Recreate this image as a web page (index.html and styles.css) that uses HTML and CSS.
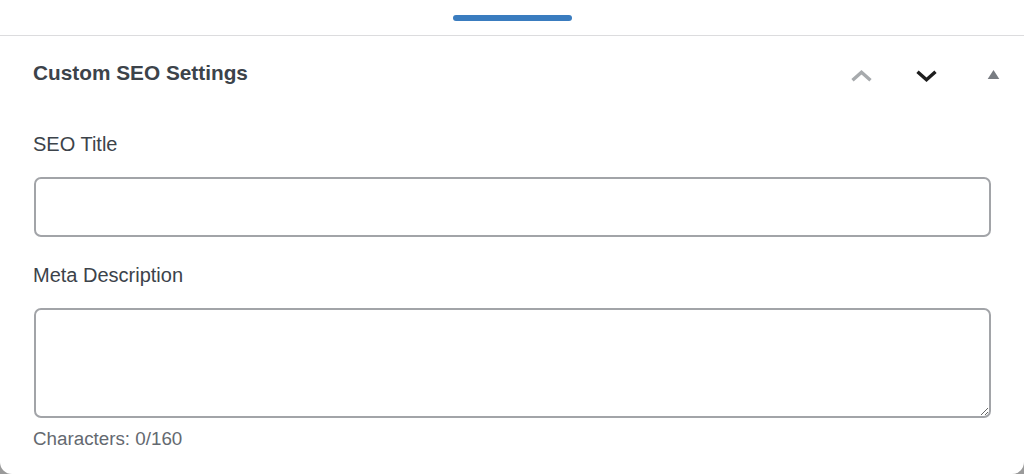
FILE: index.html
```html
<!DOCTYPE html>
<html lang="en">
<head>
    <meta charset="UTF-8">
    <meta name="viewport" content="width=device-width, initial-scale=1.0">
    <title>Custom SEO Settings</title>
    <link rel="stylesheet" href="styles.css">
</head>
<body>

    <div class="screen">
        <!-- Barra superior con el indicador -->
        <div class="top-bar">
            <span class="handle"></span>
        </div>

        <!-- Metabox de SEO -->
        <section class="metabox">
            <div class="metabox-header">
                <h2>Custom SEO Settings</h2>
                <div class="metabox-actions">
                    <button type="button" class="icon-btn" aria-label="Move up">
                        <svg width="44" height="44" viewBox="0 0 44 44">
                            <polyline points="12.5,29.3 21.5,21.3 30.5,29.3" fill="none" stroke="#a7aaad" stroke-width="3.4"/>
                        </svg>
                    </button>
                    <button type="button" class="icon-btn" aria-label="Move down">
                        <svg width="44" height="44" viewBox="0 0 44 44">
                            <polyline points="11.5,20.8 20.5,28.8 29.5,20.8" fill="none" stroke="#1e1e1e" stroke-width="3.4"/>
                        </svg>
                    </button>
                    <button type="button" class="icon-btn" aria-label="Toggle panel">
                        <svg width="44" height="44" viewBox="0 0 44 44">
                            <polygon points="15.7,28 21.5,19 27.3,28" fill="#787c82"/>
                        </svg>
                    </button>
                </div>
            </div>

            <div class="metabox-body">
                <label class="field-label" for="seo-title">SEO Title</label>
                <input type="text" id="seo-title" class="text-input">

                <label class="field-label" for="seo-description">Meta Description</label>
                <textarea id="seo-description" class="text-area"></textarea>

                <p class="counter">Characters: 0/160</p>
            </div>
        </section>
    </div>

</body>
</html>
```

FILE: styles.css
```css
/* Estilos básicos */
html, body {
    margin: 0;
    padding: 0;
    height: 474px;
    overflow: hidden;
    background-color: #9a9a9a;
    font-family: "Liberation Sans", Arial, sans-serif;
}
.screen {
    height: 474px;
    background-color: #fff;
    border-radius: 0 0 12px 12px;
}
.top-bar {
    height: 35px;
    border-bottom: 1px solid #dcdcde;
    display: flex;
    justify-content: center;
}
.handle {
    width: 119px;
    height: 6px;
    margin-top: 15px;
    border-radius: 3px;
    background-color: #3a7cbf;
}
.metabox-header {
    height: 48px;
    padding: 13px 8px 0 33px;
    display: flex;
    align-items: center;
    justify-content: space-between;
}
.metabox-header h2 {
    margin: 0;
    font-size: 20.8px;
    line-height: 24px;
    font-weight: 700;
    color: #3c434a;
}
.metabox-actions {
    display: flex;
    gap: 22px;
}
.icon-btn {
    width: 44px;
    height: 44px;
    padding: 0;
    border: none;
    background: none;
    display: flex;
    cursor: pointer;
}
.metabox-body {
    padding: 35px 33px 0 33px;
    display: flex;
    flex-direction: column;
}
.field-label {
    font-size: 20px;
    line-height: 24px;
    color: #3c434a;
    margin-bottom: 21px;
}
.text-input, .text-area {
    box-sizing: border-box;
    margin: 0 0 0 1px;
    border: 2px solid #a2a4a8;
    border-radius: 7px;
    background-color: #fff;
    outline: none;
}
.text-input {
    height: 60px;
    margin-bottom: 26px;
}
.text-area {
    height: 110px;
    resize: vertical;
}
.counter {
    margin: 10px 0 0 0;
    font-size: 18.8px;
    line-height: 22px;
    color: #646970;
}
```
